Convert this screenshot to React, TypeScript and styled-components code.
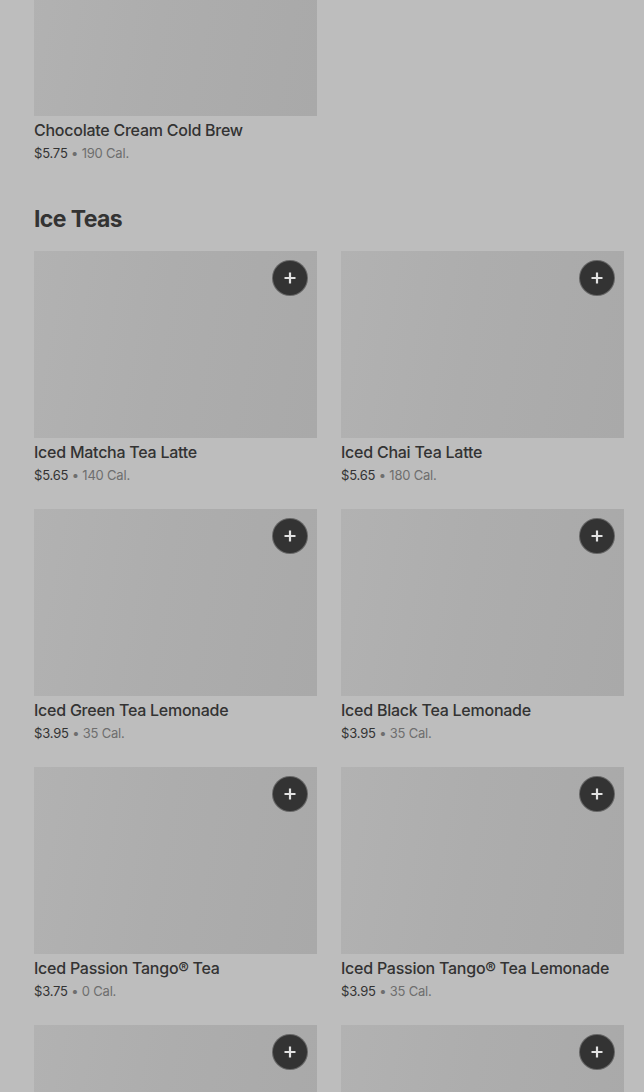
import React from 'react'
import styled, {createGlobalStyle} from 'styled-components'

const GlobalStyle = createGlobalStyle`
    html, body {
        margin: 0;
        padding: 0;
        background: #bdbdbd;
        font-family: Inter, "Noto Sans", Roboto, sans-serif;
        overflow: hidden;
    }
`

const Page = styled.div`
    box-sizing: border-box;
    width: 644px;
    height: 1092px;
    overflow: hidden;
    padding: 0 20px 0 34px;
    background: #bdbdbd;
`

const Scroller = styled.div`
    margin-top: -71px;
`

const Section = styled.section`
    margin-bottom: 39px;
`

const SectionTitle = styled.h2`
    margin: 0 0 16px;
    padding-top: 1px;
    font-size: 23px;
    line-height: 32px;
    font-weight: 700;
    color: #333333;
    letter-spacing: -0.6px;
`

const Grid = styled.div`
    display: grid;
    grid-template-columns: 1fr 1fr;
    column-gap: 24px;
    row-gap: 24px;
`

const Card = styled.div`
    display: flex;
    flex-direction: column;
`

const Thumb = styled.div`
    position: relative;
    height: 187px;
    background: linear-gradient(100deg, #b2b2b2 0%, #adadad 45%, #a9a9a9 100%);
`

const AddButton = styled.button`
    position: absolute;
    top: 9px;
    right: 9px;
    width: 36px;
    height: 36px;
    border-radius: 50%;
    border: 1px solid rgba(255, 255, 255, 0.25);
    background: #333333;
    padding: 0;
    display: flex;
    align-items: center;
    justify-content: center;
    cursor: pointer;
`

const Name = styled.div`
    margin-top: 2px;
    font-size: 16px;
    line-height: 24px;
    font-weight: 500;
    color: #333333;
    letter-spacing: -0.25px;
    white-space: nowrap;
`

const Meta = styled.div`
    margin-top: 1px;
    font-size: 13px;
    line-height: 20px;
    color: #6e6e6e;
    letter-spacing: -0.2px;
    span {
        color: #333333;
    }
`

type Item = {name: string; price: string; cal: string}

const coldBrew: Item[] = [{name: 'Chocolate Cream Cold Brew', price: '$5.75', cal: '190 Cal.'}]

const iceTeas: Item[] = [
    {name: 'Iced Matcha Tea Latte', price: '$5.65', cal: '140 Cal.'},
    {name: 'Iced Chai Tea Latte', price: '$5.65', cal: '180 Cal.'},
    {name: 'Iced Green Tea Lemonade', price: '$3.95', cal: '35 Cal.'},
    {name: 'Iced Black Tea Lemonade', price: '$3.95', cal: '35 Cal.'},
    {name: 'Iced Passion Tango® Tea', price: '$3.75', cal: '0 Cal.'},
    {name: 'Iced Passion Tango® Tea Lemonade', price: '$3.95', cal: '35 Cal.'},
    {name: 'Iced Black Tea', price: '$3.45', cal: '0 Cal.'},
    {name: 'Iced Green Tea', price: '$3.45', cal: '0 Cal.'},
]

const Plus = () => (
    <svg width="14" height="14" viewBox="0 0 14 14" fill="none">
        <path d="M7 1.5v11M1.5 7h11" stroke="#e2e2e2" strokeWidth="2.2" />
    </svg>
)

const MenuCard: React.FC<{item: Item; showAdd?: boolean}> = ({item, showAdd = true}) => (
    <Card>
        <Thumb>
            {showAdd && (
                <AddButton aria-label={`Add ${item.name}`}>
                    <Plus />
                </AddButton>
            )}
        </Thumb>
        <Name>{item.name}</Name>
        <Meta>
            <span>{item.price}</span> • {item.cal}
        </Meta>
    </Card>
)

const App: React.FC = () => {
    return (
        <Page>
            <GlobalStyle />
            <Scroller>
                <Section>
                    <Grid>
                        {coldBrew.map((item) => (
                            <MenuCard key={item.name} item={item} showAdd={false} />
                        ))}
                    </Grid>
                </Section>
                <Section>
                    <SectionTitle>Ice Teas</SectionTitle>
                    <Grid>
                        {iceTeas.map((item) => (
                            <MenuCard key={item.name} item={item} />
                        ))}
                    </Grid>
                </Section>
            </Scroller>
        </Page>
    )
}

export default App
